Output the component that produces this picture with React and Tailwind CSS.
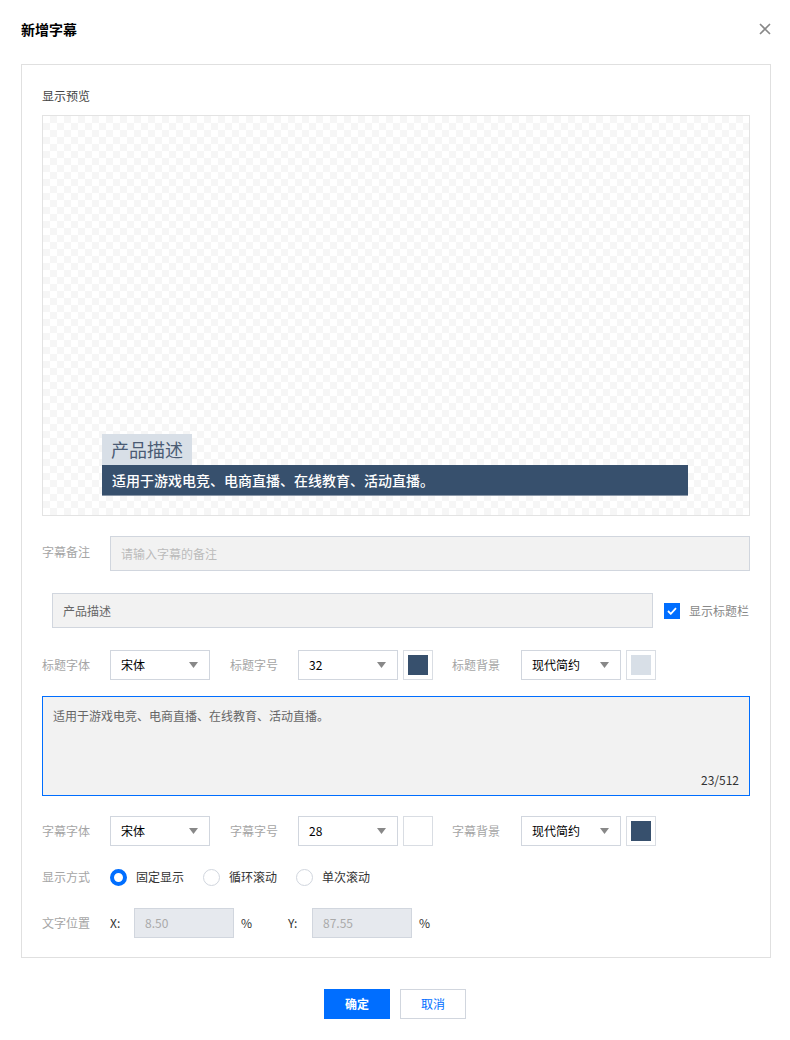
import React from "react";

const font = { fontFamily: '"Noto Sans CJK SC", "Liberation Sans", sans-serif' };

function Caret() {
  return (
    <svg width="9" height="6" viewBox="0 0 9 6" className="shrink-0">
      <path d="M0 0h9L4.5 6z" fill="#888" />
    </svg>
  );
}

function Select({ value }) {
  return (
    <div className="w-[100px] h-[30px] border border-[#d1d6de] bg-white flex items-center justify-between pl-[10px] pr-[11px] text-[12px] text-black">
      <span>{value}</span>
      <Caret />
    </div>
  );
}

function Swatch({ color }) {
  return (
    <div className="w-[30px] h-[30px] border border-[#d9dde3] bg-white p-[4px]">
      {color && <div className="w-full h-full" style={{ background: color }} />}
    </div>
  );
}

function Label({ children, className = "" }) {
  return <span className={`text-[12px] text-[#a5a5a5] whitespace-nowrap ${className}`}>{children}</span>;
}

function StyleRow({ a, b, c, size, swatchA, swatchB }) {
  return (
    <div className="flex items-center">
      <Label className="w-[68px]">{a}</Label>
      <Select value="宋体" />
      <Label className="ml-[20px] w-[68px]">{b}</Label>
      <Select value={size} />
      <div className="ml-[5px]">
        <Swatch color={swatchA} />
      </div>
      <Label className="ml-[19px] w-[69px]">{c}</Label>
      <Select value="现代简约" />
      <div className="ml-[5px]">
        <Swatch color={swatchB} />
      </div>
    </div>
  );
}

function Radio({ checked, label }) {
  return (
    <div className="flex items-center mr-[19px]">
      {checked ? (
        <span className="w-[17px] h-[17px] rounded-full border-[4px] border-[#006eff] bg-white" />
      ) : (
        <span className="w-[17px] h-[17px] rounded-full border border-[#d1d6de] bg-white" />
      )}
      <span className="ml-[9px] text-[12px] text-[#333]">{label}</span>
    </div>
  );
}

export default function App() {
  return (
    <div className="w-[790px] h-[1040px] bg-white relative" style={font}>
      <div className="flex items-center justify-between pl-[21px] pr-[19px] h-[58px]">
        <h1 className="text-[14px] font-bold text-black">新增字幕</h1>
        <svg width="12" height="12" viewBox="0 0 12 12">
          <path d="M1 1l10 10M11 1L1 11" stroke="#888" strokeWidth="1.6" />
        </svg>
      </div>

      <div className="ml-[21px] w-[750px] mt-[6px] h-[894px] border border-[#e0e0e0] px-[20px] pt-[23px]">
        <div className="text-[12px] leading-[16px] text-[#444]">显示预览</div>

        <div
          className="mt-[11px] h-[401px] border border-[#e3e3e3] flex flex-col justify-end pb-[19px] pl-[59px]"
          style={{
            backgroundColor: "#fff",
            backgroundImage:
              "linear-gradient(45deg, #f6f6f6 25%, transparent 25%, transparent 75%, #f6f6f6 75%), linear-gradient(45deg, #f6f6f6 25%, transparent 25%, transparent 75%, #f6f6f6 75%)",
            backgroundSize: "14px 14px",
            backgroundPosition: "0 0, 7px 7px",
          }}
        >
          <div className="self-start h-[31px] w-[90px] bg-[#d8dfe7] flex items-center justify-center text-[18px] text-[#4a5b74]">
            产品描述
          </div>
          <div className="h-[31px] w-[586px] bg-[#37506d] border-b border-[#8a97a8] flex items-center pl-[10px] text-[14px] font-medium text-white">
            适用于游戏电竞、电商直播、在线教育、活动直播。
          </div>
        </div>

        <div className="mt-[20px] flex items-start">
          <Label className="w-[68px] pt-[7px]">字幕备注</Label>
          <div className="flex-1 h-[35px] border border-[#d1d6de] bg-[#f2f2f2] flex items-center pl-[10px] text-[12px] text-[#bbb]">
            请输入字幕的备注
          </div>
        </div>

        <div className="mt-[22px] flex items-center pl-[10px]">
          <div className="w-[601px] h-[35px] border border-[#d1d6de] bg-[#f2f2f2] flex items-center pl-[10px] text-[12px] text-[#666]">
            产品描述
          </div>
          <span className="ml-[11px] w-[16px] h-[16px] bg-[#006eff] flex items-center justify-center">
            <svg width="10" height="8" viewBox="0 0 10 8">
              <path d="M1 4l2.8 2.8L9 1.2" stroke="#fff" strokeWidth="1.8" fill="none" />
            </svg>
          </span>
          <span className="ml-[9px] text-[12px] text-[#888] whitespace-nowrap">显示标题栏</span>
        </div>

        <div className="mt-[22px]">
          <StyleRow a="标题字体" b="标题字号" c="标题背景" size="32" swatchA="#37506d" swatchB="#d8dfe7" />
        </div>

        <div className="mt-[16px] h-[100px] border border-[#006eff] bg-[#f2f2f2] flex flex-col justify-between pl-[10px] pr-[10px] pt-[10px] pb-[6px]">
          <span className="text-[12px] text-[#666]">适用于游戏电竞、电商直播、在线教育、活动直播。</span>
          <span className="self-end text-[12px] text-[#333]">23/512</span>
        </div>

        <div className="mt-[20px]">
          <StyleRow a="字幕字体" b="字幕字号" c="字幕背景" size="28" swatchA={null} swatchB="#37506d" />
        </div>

        <div className="mt-[22px] flex items-center">
          <Label className="w-[68px]">显示方式</Label>
          <Radio checked label="固定显示" />
          <Radio label="循环滚动" />
          <Radio label="单次滚动" />
        </div>

        <div className="mt-[22px] flex items-center">
          <Label className="w-[68px]">文字位置</Label>
          <span className="w-[24px] text-[12px] text-[#333]">X:</span>
          <div className="w-[100px] h-[30px] border border-[#d1d6de] bg-[#e6e9ee] flex items-center pl-[10px] text-[12px] text-[#aaa]">
            8.50
          </div>
          <span className="ml-[7px] w-[47px] text-[12px] text-[#333]">%</span>
          <span className="w-[24px] text-[12px] text-[#333]">Y:</span>
          <div className="w-[100px] h-[30px] border border-[#d1d6de] bg-[#e6e9ee] flex items-center pl-[10px] text-[12px] text-[#aaa]">
            87.55
          </div>
          <span className="ml-[7px] text-[12px] text-[#333]">%</span>
        </div>
      </div>

      <div className="mt-[31px] flex justify-center gap-[10px]">
        <button className="w-[66px] h-[30px] bg-[#006eff] text-white text-[12px] font-bold">确定</button>
        <button className="w-[66px] h-[30px] border border-[#d1d6de] bg-white text-[#006eff] text-[12px]">取消</button>
      </div>
    </div>
  );
}
